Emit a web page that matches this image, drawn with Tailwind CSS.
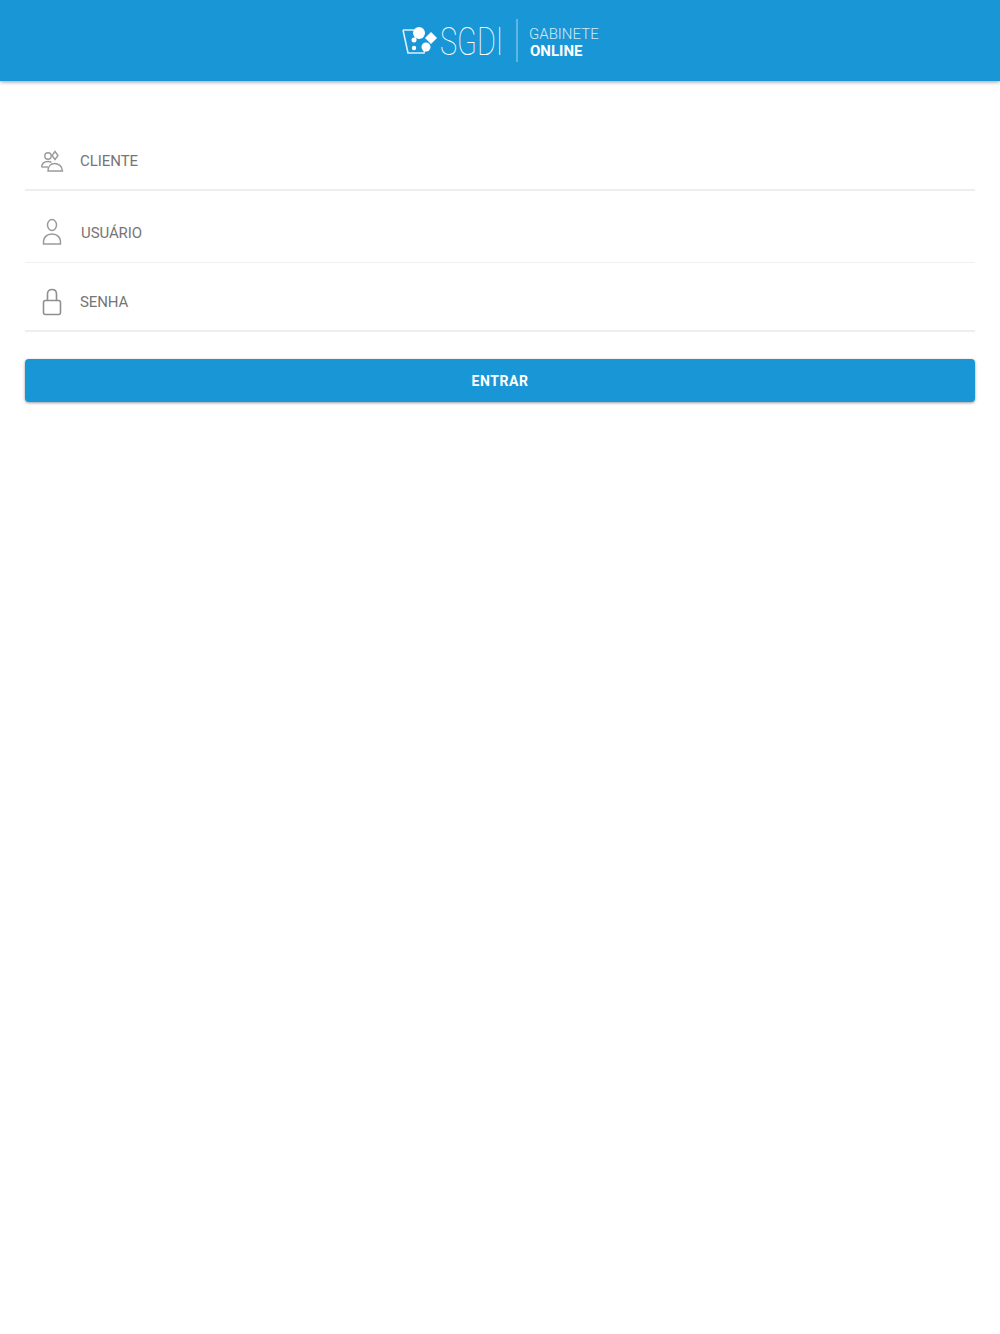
<!DOCTYPE html>
<html lang="pt-BR">
<head>
    <meta charset="UTF-8">
    <meta name="viewport" content="width=device-width, initial-scale=1.0">
    <title>SGDI Gabinete Online</title>
    <script src="https://cdn.jsdelivr.net/npm/@tailwindcss/browser@4"></script>
</head>
<body class="bg-white min-h-[1334px] font-['Roboto',sans-serif]">
    <header class="h-[81px] bg-[#1896d6] shadow-[0_1px_4px_rgba(0,0,0,0.4)] flex items-center justify-center">
        <div class="flex items-center text-white">
            <svg class="w-[40px] h-[36px]" viewBox="0 0 40 36" fill="none" stroke="white">
                <path d="M3 7 L8 30 H24 L25 26 M3 7 H14" stroke-width="1.6" stroke-opacity="0.85"/>
                <circle cx="19" cy="10" r="6" fill="white" stroke="none"/>
                <circle cx="14" cy="17" r="2.5" fill="white" stroke="none"/>
                <circle cx="26" cy="24" r="4.5" fill="white" stroke="none"/>
                <circle cx="14" cy="25" r="2.2" fill="white" stroke="none"/>
                <path d="M31 9 L37 15 L31 21 L25 15 Z" fill="white" stroke="none"/>
            </svg>
            <span class="text-[38px] leading-none font-thin w-[63px] mt-[3px] scale-x-[0.76] origin-left">SGDI</span>
            <div class="w-[2px] h-[43px] bg-white/30 ml-[13px] mr-[11px]"></div>
            <div class="flex flex-col text-[15px] leading-[17px] w-[71px] mt-[5px]">
                <span class="font-light opacity-80">GABINETE</span>
                <span class="font-bold pl-[1px]">ONLINE</span>
            </div>
        </div>
    </header>

    <main class="px-[25px] pt-[37px]">
        <form>
            <div class="h-[73px] pt-[12px] border-b-2 border-[#eeeeee] flex items-center pl-[15px]">
                <svg class="w-[24px] h-[24px] mt-[2px] text-[#9a9a9a]" viewBox="0 0 24 24" fill="none" stroke="currentColor" stroke-width="1.4">
                    <circle cx="8" cy="7" r="3.2"/>
                    <path d="M1.5 18 C2 13.5 5 12.5 8 12.5 C9.5 12.5 10.5 12.8 11.5 13.4"/>
                    <path d="M1.5 18 H8"/>
                    <path d="M15 2.5 L18 6.5 L15 10.5 L12 6.5 Z"/>
                    <path d="M8 22 C8 17 11 14.5 14.5 14.5 C18 14.5 22.5 17 22.5 22 Z"/>
                </svg>
                <span class="ml-[16px] mt-[3px] text-[15px] text-[#757575] tracking-[-0.05px]">CLIENTE</span>
            </div>
            <div class="h-[72px] pt-[10px] border-b border-[#f0f0f0] flex items-center pl-[15px]">
                <svg class="w-[24px] h-[28px] text-[#9a9a9a]" viewBox="0 0 24 28" fill="none" stroke="currentColor" stroke-width="1.5">
                    <ellipse cx="12" cy="7" rx="4.5" ry="5.5"/>
                    <path d="M3.5 26 C3 19 7 16 12 16 C17 16 21 19 20.5 26 Z"/>
                </svg>
                <span class="ml-[17px] mt-[3px] text-[15px] text-[#757575] tracking-[-0.1px]">USUÁRIO</span>
            </div>
            <div class="h-[69px] pt-[10px] border-b-2 border-[#eeeeee] flex items-center pl-[15px]">
                <svg class="w-[24px] h-[28px] mt-[1px] text-[#8f8f8f]" viewBox="0 0 24 28" fill="none" stroke="currentColor" stroke-width="1.6">
                    <rect x="3.5" y="12.5" width="17" height="14" rx="2"/>
                    <path d="M7.5 12.5 V6 C7.5 3 9.5 1.5 12 1.5 C14.5 1.5 16.5 3 16.5 6 V12.5"/>
                </svg>
                <span class="ml-[16px] mt-[2px] text-[15px] text-[#757575] tracking-[-0.1px]">SENHA</span>
            </div>
            <button type="button" class="mt-[27px] w-full h-[43px] pt-[2px] bg-[#1896d6] rounded-[4px] shadow-[0_1px_3px_rgba(0,0,0,0.4)] text-white text-[14px] font-bold tracking-[0.6px]">ENTRAR</button>
        </form>
    </main>
</body>
</html>
